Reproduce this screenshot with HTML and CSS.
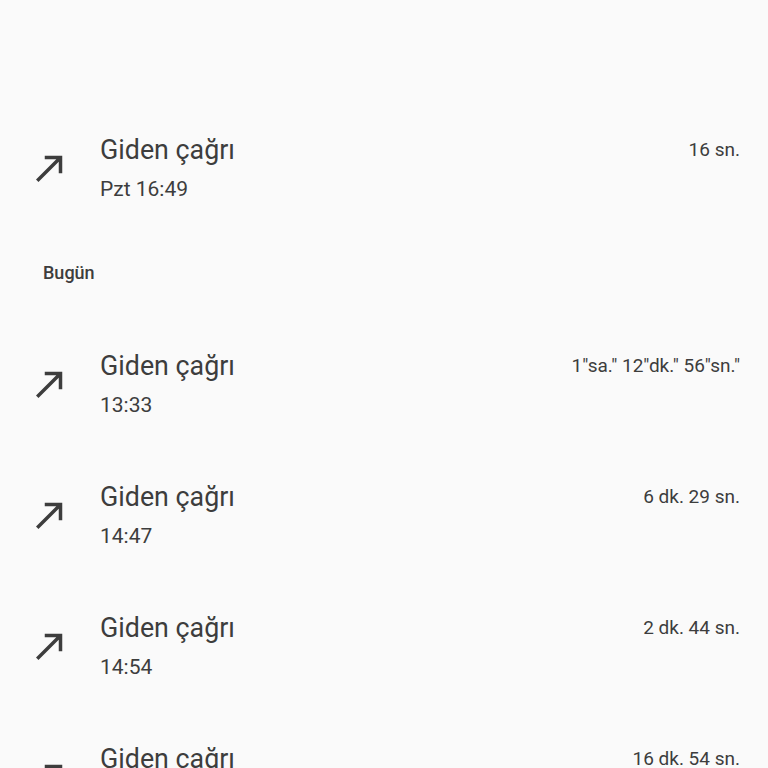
FILE: index.html
```html
<!DOCTYPE html>
<html>
<head>
    <title>Arama geçmişi</title>
    <link rel="stylesheet" href="styles.css">
</head>
<body>
    <div class="list">
        <div class="call">
            <svg class="icon" viewBox="0 0 24 24"><path d="M9 5v2h6.59L4 18.59 5.41 20 17 8.41V15h2V5z"/></svg>
            <div class="info">
                <div class="top">
                    <span class="title">Giden çağrı</span>
                    <span class="duration">16 sn.</span>
                </div>
                <div class="time">Pzt 16:49</div>
            </div>
        </div>

        <div class="header">Bugün</div>

        <div class="call">
            <svg class="icon" viewBox="0 0 24 24"><path d="M9 5v2h6.59L4 18.59 5.41 20 17 8.41V15h2V5z"/></svg>
            <div class="info">
                <div class="top">
                    <span class="title">Giden çağrı</span>
                    <span class="duration">1"sa." 12"dk." 56"sn."</span>
                </div>
                <div class="time">13:33</div>
            </div>
        </div>

        <div class="call">
            <svg class="icon" viewBox="0 0 24 24"><path d="M9 5v2h6.59L4 18.59 5.41 20 17 8.41V15h2V5z"/></svg>
            <div class="info">
                <div class="top">
                    <span class="title">Giden çağrı</span>
                    <span class="duration">6 dk. 29 sn.</span>
                </div>
                <div class="time">14:47</div>
            </div>
        </div>

        <div class="call">
            <svg class="icon" viewBox="0 0 24 24"><path d="M9 5v2h6.59L4 18.59 5.41 20 17 8.41V15h2V5z"/></svg>
            <div class="info">
                <div class="top">
                    <span class="title">Giden çağrı</span>
                    <span class="duration">2 dk. 44 sn.</span>
                </div>
                <div class="time">14:54</div>
            </div>
        </div>

        <div class="call">
            <svg class="icon" viewBox="0 0 24 24"><path d="M9 5v2h6.59L4 18.59 5.41 20 17 8.41V15h2V5z"/></svg>
            <div class="info">
                <div class="top">
                    <span class="title">Giden çağrı</span>
                    <span class="duration">16 dk. 54 sn.</span>
                </div>
                <div class="time">15:02</div>
            </div>
        </div>
    </div>
</body>
</html>
```

FILE: styles.css
```css
body {
    margin: 0;
    background-color: #fafafa;
    font-family: Roboto, "Noto Sans", sans-serif;
    color: #3d3d3d;
    height: 768px;
    overflow: hidden;
}

.list {
    padding-top: 102px;
}

.call {
    display: flex;
    align-items: center;
    height: 131px;
    padding-left: 29px;
    padding-right: 28px;
}

.icon {
    width: 42px;
    height: 42px;
    fill: #3d3d3d;
    flex-shrink: 0;
    margin-right: 29px;
}

.info {
    flex: 1;
}

.top {
    display: flex;
    justify-content: space-between;
    align-items: center;
    height: 36px;
}

.title {
    font-size: 26.8px;
}

.duration {
    font-size: 19px;
}

.time {
    font-size: 21px;
    line-height: 30px;
    margin-top: 6px;
}

.header {
    height: 85px;
    padding-left: 43px;
    font-size: 18px;
    font-weight: 500;
    line-height: 20px;
    padding-top: 30px;
    box-sizing: border-box;
}
```
